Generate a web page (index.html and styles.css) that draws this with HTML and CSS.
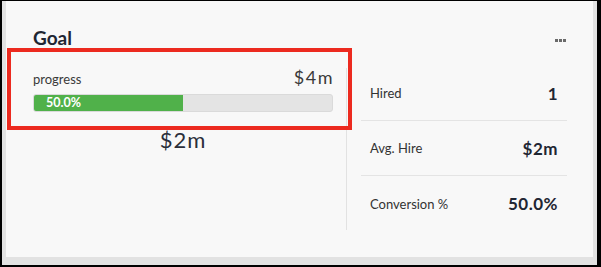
FILE: index.html
```html
<!DOCTYPE html>
<html lang="en">

<head>
    <meta charset="UTF-8">
    <meta name="viewport" content="width=device-width, initial-scale=1.0">
    <title>Goal</title>
    <link rel="stylesheet" href="styles.css">
</head>

<body>
    <div class="frame">
        <div class="card">
            <!-- Header -->
            <div class="card-header">
                <h2 class="card-title">Goal</h2>
                <span class="menu-dots"><i></i><i></i><i></i></span>
            </div>

            <div class="card-body">
                <!-- Progress column -->
                <div class="goal-col">
                    <div class="goal-top">
                        <span class="goal-label">progress</span>
                        <span class="goal-target">$4m</span>
                    </div>
                    <div class="bar">
                        <div class="bar-fill" style="width: 50%;">50.0%</div>
                    </div>
                    <div class="goal-current">$2m</div>
                </div>

                <!-- Stats column -->
                <div class="stats-col">
                    <div class="stat-row">
                        <span class="stat-label">Hired</span>
                        <span class="stat-value">1</span>
                    </div>
                    <div class="stat-row">
                        <span class="stat-label">Avg. Hire</span>
                        <span class="stat-value">$2m</span>
                    </div>
                    <div class="stat-row">
                        <span class="stat-label">Conversion %</span>
                        <span class="stat-value">50.0%</span>
                    </div>
                </div>
            </div>

            <!-- highlight annotation -->
            <div class="highlight"></div>
        </div>
    </div>
</body>

</html>
```

FILE: styles.css
```css
* {
    margin: 0;
    padding: 0;
    box-sizing: border-box;
    font-family: 'Lato', 'Open Sans', sans-serif;
}

body {
    background: #000;
    height: 267px;
    overflow: hidden;
}

.frame {
    margin: 1px 4px 2px 2px;
    padding: 0 4px 8px 4px;
    background: #e2e2e2;
    height: 264px;
}

.card {
    position: relative;
    background: #f8f8f8;
    height: 256px;
    padding: 24px 26px 0 27px;
}

.card-header {
    display: flex;
    justify-content: space-between;
    align-items: center;
    height: 26px;
}

.card-title {
    font-size: 19px;
    font-weight: 700;
    color: #1f2633;
    line-height: 26px;
}

.menu-dots {
    display: flex;
    gap: 1px;
    margin-right: 1px;
    margin-top: 4px;
}

.menu-dots i {
    width: 3px;
    height: 3px;
    background: #6a6a6a;
}

.card-body {
    display: flex;
    margin-top: 15px;
}

.goal-col {
    width: 300px;
    margin-right: 13px;
}

.goal-top {
    display: flex;
    justify-content: space-between;
    align-items: baseline;
    height: 28px;
}

.goal-label {
    font-size: 13px;
    color: #3a3a3a;
}

.goal-target {
    font-size: 18px;
    font-weight: 400;
    color: #3a3a3a;
    letter-spacing: 1.5px;
    margin-right: -1px;
}

.bar {
    height: 18px;
    background: #e4e4e4;
    border: 1px solid #dadada;
    border-radius: 3px;
    overflow: hidden;
}

.bar-fill {
    height: 100%;
    background: #50b14a;
    color: #fff;
    font-size: 12.5px;
    font-weight: 700;
    line-height: 16px;
    padding-left: 12px;
}

.goal-current {
    text-align: center;
    font-size: 22px;
    font-weight: 400;
    color: #2a2f3a;
    letter-spacing: 1px;
    margin-top: 14px;
}

.stats-col {
    flex: 1;
    border-left: 1px solid #e2e2e2;
    padding-left: 14px;
    margin-top: 2px;
    height: 162px;
}

.stat-row {
    display: flex;
    justify-content: space-between;
    align-items: center;
    height: 55px;
    padding: 0 9px 0 9px;
    border-bottom: 1px solid #e4e4e4;
}

.stat-row:first-child {
    margin-top: -2px;
}

.stat-row:last-child {
    border-bottom: none;
}

.stat-label {
    font-size: 13px;
    color: #333;
}

.stat-value {
    font-size: 17px;
    font-weight: 700;
    color: #1f2633;
    letter-spacing: 0.5px;
}

.highlight {
    position: absolute;
    left: 1px;
    top: 47px;
    width: 345px;
    height: 82px;
    border: 4px solid #ec2a1f;
    pointer-events: none;
}
```
